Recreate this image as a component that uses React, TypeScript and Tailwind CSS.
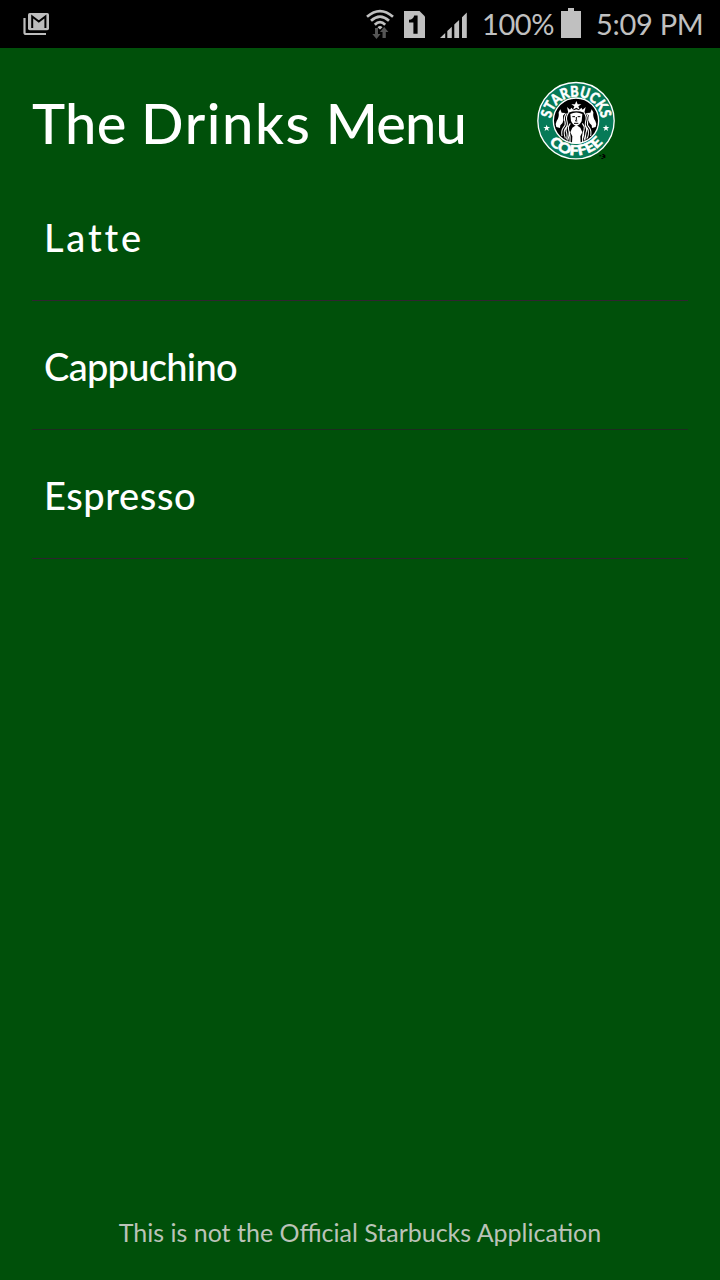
import React from "react";

const drinks = [
  { name: "Latte", spacing: "tracking-[2.8px]", line: "bg-[#312531]" },
  { name: "Cappuchino", spacing: "tracking-[-0.7px]", line: "bg-[#1c2d20]" },
  { name: "Espresso", spacing: "tracking-[0.6px]", line: "bg-[#2b252d]" },
];

function GmailIcon() {
  return (
    <svg className="ml-[23px] mt-[12px] h-6 w-[27px]" viewBox="0 0 27 24">
      <path d="M1.5 6v14.4q0 1.6 1.6 1.6H23" fill="none" stroke="#bdbdbd" strokeWidth="2.2" />
      <rect x="5" y="1" width="21" height="17.3" rx="1.8" fill="#bdbdbd" />
      <path d="M9.2 16V4.5l6.6 5 6.6-5V16" fill="none" stroke="#000" strokeWidth="2" />
    </svg>
  );
}

function WifiIcon() {
  return (
    <svg className="h-[30px] w-7" viewBox="0 0 28 30">
      <g fill="none" stroke="#c0c0c0" strokeWidth="2.7">
        <path d="M1 7.7Q14 -3.6 27 7.7" />
        <path d="M5 11.8Q14 3.5 23 11.8" />
        <path d="M8.8 15.8Q14 10.5 19.2 15.8" />
      </g>
      <path d="M11.5 18.2q2.5-2.4 5 0L14 20.5z" fill="#c0c0c0" />
      <path d="M9 19h3v6h2.6L10.5 30l-4.2-5H9zM16.5 29v-6H14l4.2-5 4.2 5h-2.6v6z" fill="#555" />
    </svg>
  );
}

function SimIcon() {
  return (
    <svg className="h-[27px] w-[21px]" viewBox="0 0 21 27">
      <path d="M0 0h15.5L21 5.5V27H0z" fill="#c0c0c0" />
      <path d="M5 8.8q4.4-.2 5.2-4.3h3.4v18.3H9.4V11.5H5z" fill="#000" />
    </svg>
  );
}

function SignalIcon() {
  return (
    <svg className="h-[26px] w-7" viewBox="0 0 28 26">
      <path d="M0 26l5.2-5v5zM7.3 19l4.5-4.2V26H7.3zM14.3 12.5l4.8-4.6V26h-4.8zM22 5.2L26.8.5V26H22z" fill="#c0c0c0" />
    </svg>
  );
}

function BatteryIcon() {
  return (
    <svg className="h-[30px] w-5" viewBox="0 0 20 30">
      <path d="M7 0h6v3h7v27H0V3h7z" fill="#c0c0c0" />
    </svg>
  );
}

function StatusBar() {
  return (
    <div className="flex h-12 shrink-0 items-start bg-black text-[29px] leading-[48px] text-[#c0c0c0]">
      <GmailIcon />
      <div className="ml-[316px] mt-[9px]"><WifiIcon /></div>
      <div className="ml-[10px] mt-[11px]"><SimIcon /></div>
      <div className="ml-[15px] mt-[12px]"><SignalIcon /></div>
      <span className="ml-[14px] w-[79px] whitespace-nowrap tracking-[-0.4px]">100%</span>
      <div className="mt-[8px]"><BatteryIcon /></div>
      <span className="ml-[15px] whitespace-nowrap tracking-[-0.3px]">5:09 PM</span>
    </div>
  );
}

function Logo() {
  return (
    <svg className="h-[92px] w-[92px]" viewBox="0 0 276 276">
      <circle cx="138" cy="137" r="114.5" fill="#067a58" stroke="#fff" strokeWidth="4" />
      <circle cx="138" cy="137" r="68" fill="#000" stroke="#fff" strokeWidth="4" />
      <defs>
        <path id="logo-top" d="M62 141a76 76 0 0 1 152 0" />
        <path id="logo-bottom" d="M34 137a104 104 0 0 0 208 0" />
      </defs>
      <g fill="#fff" stroke="#fff" strokeWidth="1.5" fontSize="45" fontWeight="900" textAnchor="middle" className="font-['Lato','Liberation_Sans',sans-serif]">
        <text>
          <textPath href="#logo-top" startOffset="50%" textLength="218" lengthAdjust="spacingAndGlyphs">STARBUCKS</textPath>
        </text>
        <text fontSize="42">
          <textPath href="#logo-bottom" startOffset="50%" textLength="186" lengthAdjust="spacingAndGlyphs">COFFEE</textPath>
        </text>
      </g>
      <g fill="#fff">
        <path d="M50 149l2.6 7h7.4l-6 4.5 2.2 7.5-6.2-4.4-6.2 4.4 2.2-7.5-6-4.5h7.4z" />
        <path d="M228 149l2.6 7h7.4l-6 4.5 2.2 7.5-6.2-4.4-6.2 4.4 2.2-7.5-6-4.5h7.4z" />
        <path d="M139 78l4 10h11l-9 6 4 10-10-6-10 6 4-10-9-6h11z" />
        <path d="M111 96l9 8 4-6 7 8 8-3 8 3 7-8 4 6 9-8-4 17q-24-8-48 0z" />
        <path d="M121 117q18-9 36 0l-2 21q-5 12-16 15-11-3-16-15z" />
        <path d="M127 158l12-8 12 8 6 14-6 12 1 20q-13 4-26 0l1-20-6-12z" />
        <path d="M86 112l5-9 4 10 11 1-7 8 1 14q0 8-9 15l-1 8-11-3q-4-10 1-18 8-10 6-26zM190 112l-5-9-4 10-11 1 7 8-1 14q0 8 9 15l1 8 11-3q4-10-1-18-8-10-6-26z" />
      </g>
      <g fill="none" stroke="#fff" strokeWidth="3.2">
        <path d="M116 112q-10 14-5 27 4 12-5 21-7 10 0 30M109 115q-9 12-4 25 3 10-5 18-7 9-4 25M121 145q-8 9-5 20 4 11-3 32M113 151q-8 11-3 22 3 11 0 20M118 170q4 18 2 32" />
        <path d="M162 112q10 14 5 27-4 12 5 21 7 10 0 30M169 115q9 12 4 25-3 10 5 18 7 9 4 25M157 145q8 9 5 20-4 11 3 32M165 151q8 11 3 22-3 11 0 20M160 170q-4 18-2 32" />
      </g>
      <path d="M127 125h8m8 0h8M139 126v9l-3 3h6M132 145h13" fill="none" stroke="#000" strokeWidth="3" />
      <path d="M208 241h6v3h-6zM217 237h6v3h3v9h-6v3h-6v-3h6v-3h-3v-3h3v-3h-3z" fill="#000" />
    </svg>
  );
}

export default function App() {
  return (
    <main className="flex h-[1280px] w-[720px] flex-col overflow-hidden bg-[#00500a] font-['Lato','Noto_Sans',sans-serif] text-white">
      <StatusBar />
      <header className="flex h-[124px] shrink-0 items-start pl-8 pt-[27px]">
        <h1 className="w-[498px] whitespace-nowrap pt-[13px] text-[56px] font-medium leading-[70px] tracking-[0.3px]">
          The <span className="tracking-[1.6px]">Drinks</span> <span className="tracking-[-0.9px]">Menu</span>
        </h1>
        <Logo />
      </header>
      <ul className="mx-8">
        {drinks.map((drink) => (
          <li key={drink.name} className="flex h-[129px] flex-col">
            <span className={`flex-1 pl-3 pt-[41px] text-[38px] font-medium leading-[48px] ${drink.spacing}`}>{drink.name}</span>
            <div className={`h-px w-full ${drink.line}`} />
          </li>
        ))}
      </ul>
      <footer className="mt-auto pb-[31px] text-center text-[25px] leading-[34px] tracking-[0px] text-[#bbc3b8]">
        This is not the Official Starbucks Application
      </footer>
    </main>
  );
}
